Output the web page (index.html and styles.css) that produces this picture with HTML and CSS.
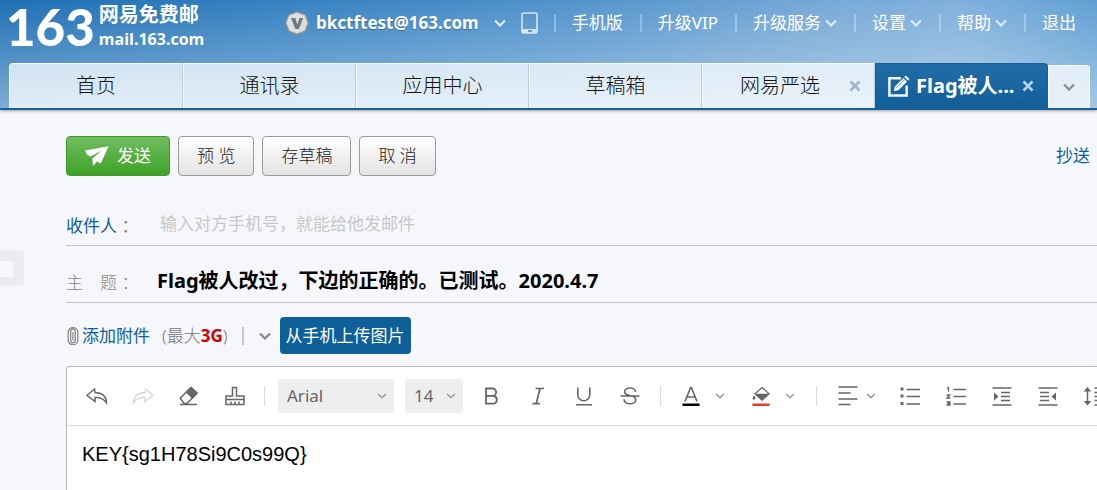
FILE: index.html
```html
<!DOCTYPE html>
<html lang="zh-CN">
<head>
<meta charset="utf-8">
<title>网易免费邮 - 写信</title>
<meta name="viewport" content="width=device-width, initial-scale=1">
<link rel="stylesheet" href="styles.css">
</head>
<body>
<svg class="defs" aria-hidden="true">
  <symbol id="chevron" viewBox="0 0 12 8"><path d="M1 1.5l5 5 5-5" fill="none" stroke="currentColor" stroke-width="2.2"/></symbol>
  <symbol id="chevron-thin" viewBox="0 0 10 6"><path d="M1.2 1l3.8 3.8L8.800 1" fill="none" stroke="currentColor" stroke-width="1.500"/></symbol>
  <symbol id="cross" viewBox="0 0 12 12"><path d="M1.500 1.500l9 9M10.500 1.500l-9 9" fill="none" stroke="currentColor" stroke-width="2.600"/></symbol>
</svg>

<header class="header">
  <div class="topbar">
    <a class="logo" href="#">
      <span class="logo-number">163</span>
      <span class="logo-names"><span class="logo-cn">网易免费邮</span><span class="logo-domain">mail.163.com</span></span>
    </a>
    <div class="account">
      <svg class="badge" viewBox="0 0 24 24" aria-hidden="true">
        <path d="M12 .8l4.200 1.500 4.200 1.700 1.400 4L23.300 12l-1.600 4.200-1.600 4-4 1.500-4.100 1.500-4.100-1.600-4-1.500-1.500-4L.7 12l1.500-4.200 1.700-4 4-1.500z" fill="#dcdedf" stroke="#8e9297" stroke-width="1.300"/>
        <path d="M6 7h4.300l2 6.600L14.500 7h3.700l-4.300 11h-3.500z" fill="#74787c"/>
      </svg>
      <span class="address">bkctftest@163.com</span>
      <svg class="chevron"><use href="#chevron"/></svg>
      <svg class="phone" viewBox="0 0 17 22" aria-hidden="true">
        <rect x="1" y="1" width="15" height="20" rx="1.500" fill="none" stroke="#d3e5f5" stroke-width="1.600"/>
        <path d="M1 17h15v4H1z" fill="#d3e5f5"/><path d="M7 19h4" stroke="#3980bd" stroke-width="1.500"/>
      </svg>
    </div>
    <nav class="links">
      <a href="#">手机版</a>
      <a href="#">升级VIP</a>
      <a href="#">升级服务<svg class="chevron"><use href="#chevron"/></svg></a>
      <a href="#">设置<svg class="chevron"><use href="#chevron"/></svg></a>
      <a href="#">帮助<svg class="chevron"><use href="#chevron"/></svg></a>
      <a href="#">退出</a>
    </nav>
  </div>
  <nav class="tabs">
    <a class="tab tab-first" href="#">首页</a>
    <a class="tab" href="#">通讯录</a>
    <a class="tab" href="#">应用中心</a>
    <a class="tab" href="#">草稿箱</a>
    <div class="tab tab-closable"><a class="tab-label" href="#">网易严选</a><button class="close" aria-label="关闭"><svg><use href="#cross"/></svg></button></div>
    <div class="tab tab-active">
      <svg class="edit" viewBox="0 0 24 24" aria-hidden="true">
        <path d="M14.500 3.500H2.500v18h18V11" fill="none" stroke="#eef5fb" stroke-width="2.600"/>
        <path d="M7 17l1.200-5L17 3.200l3.800 3.800L12 15.800z" fill="#eef5fb"/>
        <path d="M18 2.200L19.800.5 23.500 4.200l-1.700 1.800z" fill="#eef5fb"/>
        <path d="M9.500 13.500L18 5" stroke="#1a66a3" stroke-width=".6"/>
      </svg>
      <a class="tab-label" href="#">Flag被人...</a><button class="close" aria-label="关闭"><svg><use href="#cross"/></svg></button>
    </div>
    <button class="tab-more" aria-label="更多"><svg class="chevron"><use href="#chevron"/></svg></button>
  </nav>
</header>

<button class="side-handle" aria-label="展开"><span></span></button>

<main class="compose">
  <div class="actions">
    <button class="btn btn-send">
      <svg viewBox="0 0 24 20" aria-hidden="true"><path d="M0 4.500L23.500.3 15.800 17.500l-4.200-2.100-2.500 3.800-1.200-.3-.5-6.400L16.500 4.500 5.600 10.600 2 8.700z" fill="#fff"/></svg>发送
    </button>
    <button class="btn">预 览</button>
    <button class="btn">存草稿</button>
    <button class="btn">取 消</button>
    <a class="cc" href="#">抄送</a>
  </div>

  <div class="field">
    <label class="field-name field-link" for="to">收件人 <span>：</span></label>
    <input class="to" id="to" type="text" placeholder="输入对方手机号，就能给他发邮件">
  </div>
  <div class="field field-subject">
    <label class="field-name" for="subject">主　题 ：</label>
    <input class="subject" id="subject" type="text" value="Flag被人改过，下边的正确的。已测试。2020.4.7">
  </div>

  <div class="attach">
    <svg class="clip" viewBox="0 0 12 18" aria-hidden="true"><path d="M3.700 14.500V4.500a2.300 2.300 0 0 1 4.600 0v9a2.300 2.300 0 0 1-4.600 0M1.200 14V5a4.800 4.300 0 0 1 9.600 0v8.500a4.800 4.300 0 0 1-9.600 0M6 5v8.500" fill="none" stroke="#858585" stroke-width="1.200"/></svg>
    <a class="attach-link" href="#">添加附件</a>
    <span class="limit">(最大<b>3G</b>)</span>
    <button class="attach-more" aria-label="更多附件"><svg class="chevron"><use href="#chevron"/></svg></button>
    <button class="upload">从手机上传图片</button>
  </div>

  <section class="editor">
    <div class="toolbar">
      <div class="tools">
        <button class="tool" aria-label="撤销"><svg viewBox="0 0 22 20"><path d="M8.500 3L1 9.300l8 6.200v-4c5-.5 8.500 1 11.500 5.200C20.500 10.500 16 6.500 9 6.500z"/></svg></button>
        <button class="tool tool-off" aria-label="重做"><svg viewBox="0 0 22 20"><path d="M13.500 3L21 9.300l-8 6.200v-4c-5-.5-8.500 1-11.500 5.200C1.500 10.500 6 6.500 13 6.500z"/></svg></button>
        <button class="tool" aria-label="清除格式"><svg viewBox="0 0 22 20"><path d="M2.300 12L13 1.500l6 5.500-10 10.500H6z"/><path d="M8.500 6L13 1.500l6 5.500-4.500 5z" fill="currentColor"/><path d="M2 18.500h17"/></svg></button>
        <button class="tool" aria-label="格式刷"><svg viewBox="0 0 22 20"><path d="M2 18.500V10h6.500V1.500h4V10H20v8.500zM2 13.500h18M7 18v-2.500M11 18v-2.500M15 18v-2.500"/></svg></button>
      </div>
      <i class="divider"></i>
      <span class="picker picker-font"><select aria-label="字体"><option>Arial</option></select><svg><use href="#chevron-thin"/></svg></span>
      <span class="picker picker-size"><select aria-label="字号"><option>14</option></select><svg><use href="#chevron-thin"/></svg></span>
      <div class="tools tools-style">
        <button class="tool" aria-label="加粗"><svg viewBox="0 0 22 20"><path d="M5 2.500h6.500a3.600 3.600 0 0 1 0 7.300H5zM5 9.800h7.500a4 4 0 0 1 0 7.900H5z" stroke-width="1.800"/></svg></button>
        <button class="tool" aria-label="斜体"><svg viewBox="0 0 22 20"><path d="M8.500 2.500h8.500M5.500 17.700H13M13 2.500L9.200 17.700" stroke-width="1.700"/></svg></button>
        <button class="tool" aria-label="下划线"><svg viewBox="0 0 22 20"><path d="M4.800 1.500v7.300a6 6 0 0 0 12 0V1.500M3 18.700h16" stroke-width="1.600"/></svg></button>
        <button class="tool" aria-label="删除线"><svg viewBox="0 0 22 20"><path d="M16.500 6c0-2.500-2.400-4-5.500-4S5.600 3.500 5.600 5.800c0 5.500 11.200 2.500 11.200 7.700 0 2.700-2.600 4.300-5.800 4.300S5 16.200 5 13.300M1.500 10h19" stroke-width="1.600"/></svg></button>
      </div>
      <i class="divider"></i>
      <div class="tools tools-color">
        <button class="tool" aria-label="文字颜色"><svg viewBox="0 0 22 20"><path d="M5 15.500L10.600 1.500h.8L17 15.500M7 11h8" stroke-width="1.600"/><path d="M2.500 19h17" stroke="#000" stroke-width="3"/></svg></button>
        <button class="caret" aria-label="选择文字颜色"><svg><use href="#chevron-thin"/></svg></button>
        <button class="tool" aria-label="背景颜色"><svg viewBox="0 0 22 20"><path d="M12 1.500L19 7.800 12 14.200 5 7.800z" stroke-width="1.300"/><path d="M5 7.800h14L12 14.500zM4 9.500c2 2 1.800 4.200 0 4.200s-2-2.200 0-4.200z" fill="currentColor" stroke="none"/><path d="M2.500 19h17" stroke="#e43d30" stroke-width="3"/></svg></button>
        <button class="caret" aria-label="选择背景颜色"><svg><use href="#chevron-thin"/></svg></button>
      </div>
      <i class="divider"></i>
      <div class="tools tools-align">
        <button class="tool" aria-label="对齐"><svg viewBox="0 0 22 20"><path d="M1.500 1h19M1.500 7h12M1.500 13h19M1.500 18.500h12"/></svg></button>
        <button class="caret" aria-label="选择对齐"><svg><use href="#chevron-thin"/></svg></button>
      </div>
      <div class="tools">
        <button class="tool" aria-label="项目符号"><svg viewBox="0 0 22 20"><path d="M7.500 3.500h13.500M7.500 10.500h13.500M7.500 18h13.500"/><path d="M1.500 3h3M1.500 10h3M1.500 17.500h3" stroke-width="2.800"/></svg></button>
        <button class="tool" aria-label="编号"><svg viewBox="0 0 22 20"><path d="M8.500 3.500H21M8.500 10.500H21M8.500 18H21"/><path d="M2 2l1.500-.5v4M1.500 9h3.300L2 12h3.500M1.500 16h3.500v3H1.500M2.500 17.500H5" stroke-width="1.300"/></svg></button>
        <button class="tool" aria-label="增加缩进"><svg viewBox="0 0 22 20"><path d="M1.500 2h19M10 6.500h9M10 10.500h9M10 14.500h9M1.500 19h19"/><path d="M3 6.500l4.500 4L3 14.500z" fill="currentColor" stroke="none"/></svg></button>
        <button class="tool" aria-label="减少缩进"><svg viewBox="0 0 22 20"><path d="M1.500 2h19M3 6.500h9M3 10.500h9M3 14.500h9M1.500 19h19"/><path d="M19 6.500l-4.500 4 4.500 4z" fill="currentColor" stroke="none"/></svg></button>
        <button class="tool" aria-label="行高"><svg viewBox="0 0 22 20"><path d="M4.500 3v14M11.500 2h9.500M11.500 6.500h9.500M11.500 10.500h9.500M11.500 14.500h9.500M11.500 19h9.500"/><path d="M4.500 1l3.800 4.500H.7zM4.500 19.500l3.800-4.500H.7z" fill="currentColor" stroke="none"/></svg></button>
      </div>
    </div>
    <div class="content" contenteditable="true" role="textbox" aria-label="正文">KEY{sg1H78Si9C0s99Q}</div>
  </section>
</main>
</body>
</html>
```

FILE: styles.css
```css
* { box-sizing: border-box; }

body {
  margin: 0;
  min-height: 100vh;
  display: flex;
  flex-direction: column;
  overflow: hidden;
  background: #f5f7fb;
  color: #333;
  font: 17px/24px "Noto Sans", "Noto Sans CJK SC", sans-serif;
}

a { color: inherit; text-decoration: none; }

button, input, select {
  margin: 0;
  padding: 0;
  border: 0;
  background: none;
  color: inherit;
  font: inherit;
}

svg { display: block; flex: none; }
.defs { position: absolute; width: 0; height: 0; }
.chevron { width: 12px; height: 8px; }

/* Header */
.header {
  border-bottom: 2px solid #165f9b;
  box-shadow: 0 1px 3px rgba(0, 0, 0, .35);
  background:
    linear-gradient(180deg, rgba(255, 255, 255, 0), rgba(255, 255, 255, .42)),
    linear-gradient(90deg, #1f6fb4 0%, #3681c1 26%, #5092cb 50%, #78a9d7 76%, #7fb0dc 88%, #609fd3 100%);
}

.topbar {
  display: flex;
  align-items: center;
  height: 63px;
  padding: 0 21px 18px 6px;
  color: #fff;
  white-space: nowrap;
}

.logo { display: flex; align-items: center; gap: 4px; width: 279px; padding-top: 8px; }
.logo-number { font: 900 51px/62px Lato, sans-serif; }
.logo-names { display: grid; font-weight: 700; line-height: 24px; }
.logo-cn { font-size: 20px; }
.logo-domain { font: 700 16px/24px "Open Sans", sans-serif; }

.account { display: flex; align-items: center; gap: 7px; }
.badge { width: 24px; height: 24px; }
.address { font-weight: 700; text-shadow: 0 1px 1px rgba(30, 70, 110, .5); }
.account .chevron { margin: 0 8px; color: #dceaf7; }
.phone { width: 17px; height: 22px; }

.links { display: flex; margin-left: auto; line-height: 18px; }
.links a {
  display: flex;
  align-items: center;
  gap: 4px;
  padding: 0 17px 0 16px;
  border-left: 2px solid rgba(255, 255, 255, .3);
}
.links a:last-child { padding-right: 0; }
.links .chevron { color: #dceaf7; }

.tabs {
  display: grid;
  grid-template-columns: minmax(0, 174px) repeat(5, minmax(0, 173px)) 42px;
  padding-left: 9px;
  font-size: 20px;
}
.tab {
  display: flex;
  align-items: center;
  justify-content: center;
  height: 45px;
  border-top: 1px solid #f5fafd;
  border-left: 1px solid #f0f6fb;
  border-right: 1px solid #bccddb;
  background: linear-gradient(180deg, rgba(244, 249, 253, .78), rgba(248, 252, 255, .8));
  color: #111;
  font-weight: 300;
  white-space: nowrap;
}
.tab-first { border-top-left-radius: 4px; }
.tab-label { flex: 1; text-align: center; }
.tab-closable { padding: 0 13px 0 8px; }
.close { color: #9fb5ca; }
.close svg { width: 12px; height: 12px; }
.tab-active {
  gap: 6px;
  padding: 0 13px 0 11px;
  border-color: #165f9b;
  border-top-right-radius: 4px;
  background: linear-gradient(180deg, #226da8, #115e98);
  color: #fff;
  font-weight: 700;
}
.tab-active .tab-label { text-align: left; }
.tab-active .close { color: #b4d2ea; }
.edit { width: 23px; height: 23px; }
.tab-more {
  display: flex;
  align-items: center;
  justify-content: center;
  margin-top: 2px;
  border: 1px solid #f5fafd;
  border-bottom: 0;
  border-radius: 0 4px 0 0;
  background: rgba(246, 250, 253, .8);
  color: #8b8b8b;
}

/* Handle lying over the page's left edge */
.side-handle {
  position: absolute;
  left: 0;
  top: 250px;
  width: 24px;
  height: 36px;
  padding: 11px 11px 9px 0;
  border-radius: 0 4px 4px 0;
  background: #ebecef;
}
.side-handle span { display: block; height: 16px; border-radius: 0 2px 2px 0; background: #f7f8fb; }

/* Compose form */
.compose {
  display: flex;
  flex: 1;
  flex-direction: column;
  padding: 26px 0 0 66px;
}

.actions { display: flex; align-items: center; gap: 8px; }
.btn {
  height: 40px;
  padding: 0 18px;
  border: 1px solid #9a9a9a;
  border-radius: 4px;
  background: linear-gradient(180deg, #fff, #e3e3e3);
  color: #222;
  font-weight: 300;
}
.btn-send {
  display: flex;
  align-items: center;
  gap: 8px;
  border-color: #3f9a2c;
  background: linear-gradient(180deg, #6fbd5e, #3fa228);
  color: #fff;
  font-weight: 400;
}
.btn-send svg { width: 24px; height: 20px; }
.cc { margin: 0 7px 0 auto; color: #0f5f9b; }

.field {
  display: flex;
  align-items: center;
  height: 43px;
  margin-top: 27px;
  border-bottom: 1px solid #c3c5c9;
}
.field-subject { margin-top: 14px; }
.field-name { width: 91px; padding-top: 4px; color: #888; font-weight: 300; white-space: nowrap; }
.field-link { color: #0f5f9b; font-weight: 400; }
.field-link span { color: #888; }
.to, .subject { flex: 1; min-width: 0; outline: 0; }
.to { padding-left: 3px; }
.to::placeholder { color: #c8c8c8; opacity: 1; }
.subject { color: #000; font-size: 20px; font-weight: 700; }

.attach { display: flex; align-items: center; margin-top: 14px; white-space: nowrap; }
.clip { width: 12px; height: 18px; margin: 0 3px 0 1px; }
.attach-link { color: #0f5f9b; }
.limit { margin: 0 14px 0 12px; color: #777; font-weight: 300; }
.limit b { color: #c00; font-weight: 700; }
.attach-more { height: 18px; padding: 0 9px 0 15px; border-left: 2px solid #c4c6ca; color: #858585; }
.upload {
  height: 37px;
  padding: 0 6px;
  border-radius: 4px;
  background: #0f5f9b;
  color: #fff;
}

/* Rich text editor, open towards the window's right edge */
.editor {
  flex: 1;
  margin-top: 12px;
  border: solid #b5b8b8;
  border-width: 1px 0 0 1px;
  border-top-left-radius: 4px;
  background: #fff;
  overflow: hidden;
}
.toolbar {
  display: flex;
  align-items: center;
  height: 59px;
  padding-left: 19px;
  border-bottom: 1px solid #dcdcdc;
  color: #666;
}
.tools { display: flex; flex: none; align-items: center; gap: 24px; }
.tool { width: 22px; height: 20px; flex: none; }
.tool svg { width: 22px; height: 20px; fill: none; stroke: currentColor; stroke-width: 1.500; }
.tool-off { color: #d9d9d9; }
.caret { padding: 0 1px; color: #999; }
.caret svg, .picker svg { width: 10px; height: 6px; color: #999; }
.divider { flex: none; width: 1px; height: 20px; margin: 0 13px 0 18px; background: #dcdcdc; }

.picker { display: grid; flex: none; align-items: center; height: 34px; border-radius: 3px; background: #eee; }
.picker select { grid-area: 1 / 1; width: 100%; height: 34px; padding-left: 9px; appearance: none; }
.picker svg { grid-area: 1 / 1; justify-self: end; margin-right: 7px; pointer-events: none; }
.picker-font { width: 116px; }
.picker-size { width: 58px; margin-left: 11px; }
.tools-style { margin-left: 18px; }
.tools-style + .divider { margin: 0 19px; }
.tools-color { gap: 12px; }
.tools-color .caret + .tool { margin-left: 12px; }
.tools-color + .divider { margin: 0 20px; }
.tools-align { gap: 6px; margin-right: 22px; }

.content {
  padding: 16px 15px;
  color: #000;
  font: 20px/24px "Liberation Sans", Arial, sans-serif;
  outline: 0;
}
```
